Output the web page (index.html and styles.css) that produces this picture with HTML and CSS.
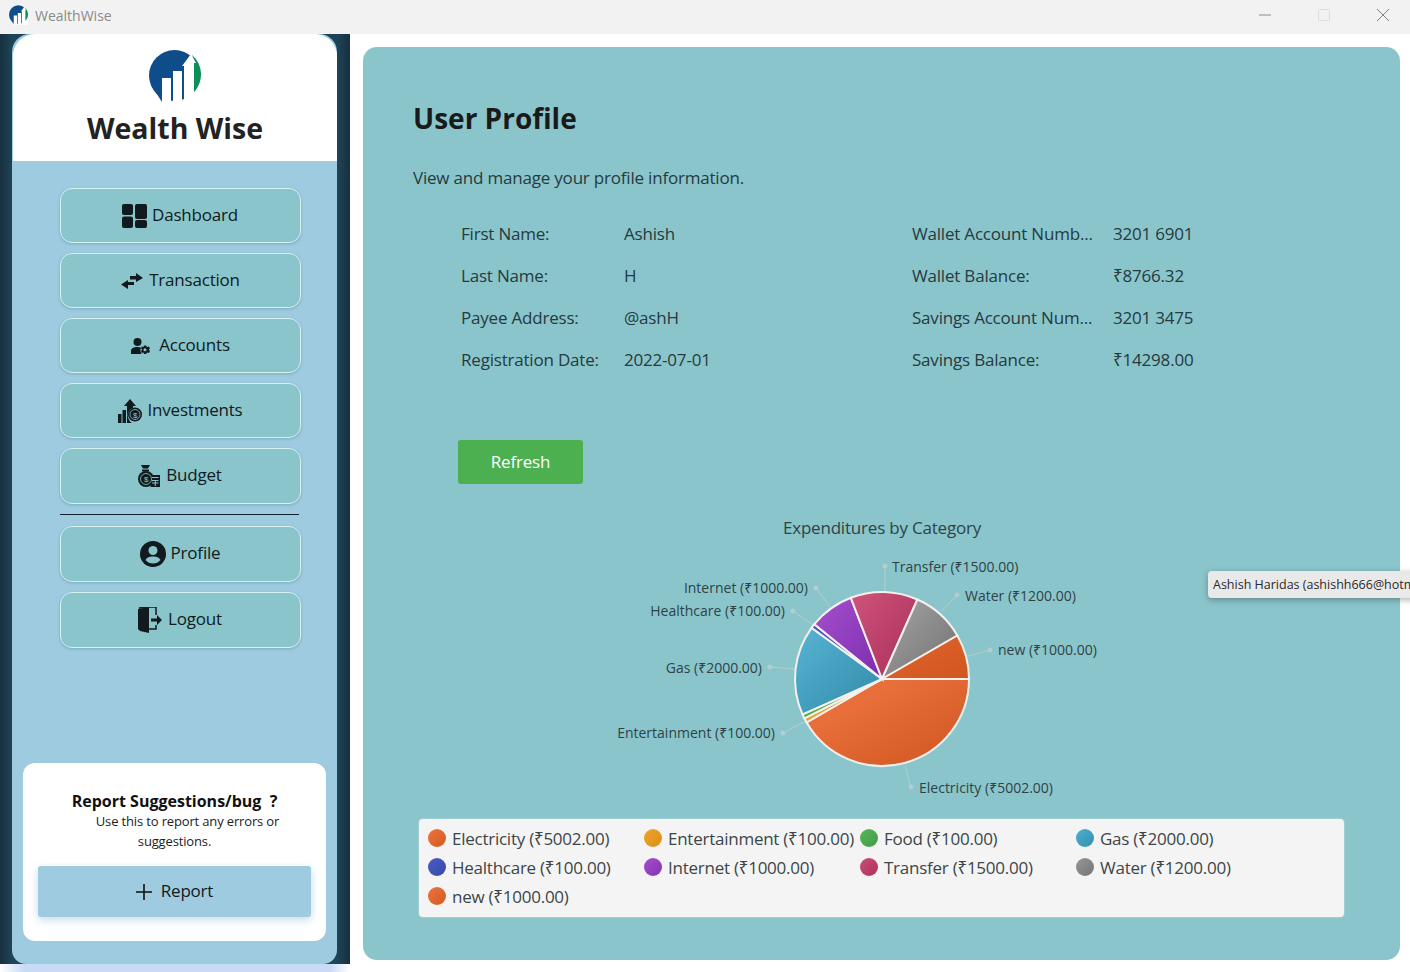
FILE: index.html
```html
<!DOCTYPE html>
<html lang="en">
<head>
  <meta charset="UTF-8">
  <meta name="viewport" content="width=device-width, initial-scale=1.0">
  <title>WealthWise</title>
  <link rel="stylesheet" href="styles.css">
</head>
<body>
  <svg class="defs" width="0" height="0">
    <symbol id="logo" viewBox="0 0 52 53">
      <circle cx="25.5" cy="25.5" r="25.5" fill="#0f4c8a"/>
      <path d="M2 35L13 52V25Z" fill="#0f4c8a"/>
      <path d="M43 5A25.5 25.5 0 0 1 45 42V13Z" fill="#0b8f57"/>
      <path d="M45 42H52V53H45ZM13 28H22V53H13ZM24 21H33V53H24ZM35 53V16H33L42 4L47 13H45V53Z" fill="#fff"/>
    </symbol>
  </svg>

  <header class="titlebar">
    <div class="app-name">
      <svg class="app-icon"><use href="#logo"/></svg>
      <span>WealthWise</span>
    </div>
    <div class="win-controls">
      <svg width="14" height="14" viewBox="0 0 14 14"><path d="M1 7H13" stroke="#8c8c8c"/></svg>
      <svg width="14" height="14" viewBox="0 0 14 14"><rect x="1.5" y="1.5" width="11" height="11" rx="1" fill="none" stroke="#dcdcdc"/></svg>
      <svg width="14" height="14" viewBox="0 0 14 14"><path d="M1 1L13 13M13 1L1 13" stroke="#808080"/></svg>
    </div>
  </header>

  <div class="window">
    <div class="side-col">
      <aside class="sidebar">
        <div class="panel">
          <div class="brand">
            <svg class="brand-logo"><use href="#logo"/></svg>
            <div class="brand-name">Wealth Wise</div>
          </div>

          <nav class="nav">
            <a class="nav-btn" href="#">
              <svg class="icon-shift" width="25" height="24" viewBox="0 0 25 24" fill="#111a1e"><rect width="11" height="11" rx="2"/><rect x="13" width="12" height="15" rx="2"/><rect y="12.500" width="11" height="11.500" rx="2"/><rect x="13" y="16" width="12" height="8" rx="2"/></svg>
              <span class="nav-label">Dashboard</span>
            </a>
            <a class="nav-btn" href="#">
              <svg width="22" height="16" viewBox="0 0 22 16" fill="#111a1e"><path d="M9 3H15V0L22 5L15 9V6.500H9ZM13 8.500V12H7V16L0 11.500L7 7V9H13Z"/></svg>
              <span class="nav-label nav-label-wide">Transaction</span>
            </a>
            <a class="nav-btn" href="#">
              <svg width="20" height="16" viewBox="0 0 20 16" fill="#111a1e"><circle cx="6.500" cy="4" r="4"/><path d="M0 16V13C0 10 3 9 6.500 9C8 9 9 9.200 10 9.500C9 12 9.500 14 10.500 16Z"/><path d="M15 7.500L16 9L18 8.500L19 10.500L17.800 11.500L19 13L18 15L16 14.500L15 16L13 16L12.500 14.500L10.800 15L10 13L11.200 11.500L10 10.500L10.800 8.500L12.500 9L13 7.500ZM14 10.300A1.500 1.500 0 1 0 14 13.300A1.500 1.500 0 1 0 14 10.300Z" fill-rule="evenodd"/></svg>
              <span class="nav-label nav-label-wider">Accounts</span>
            </a>
            <a class="nav-btn" href="#">
              <svg width="24" height="24" viewBox="0 0 24 24"><g fill="#111a1e"><rect y="15" width="3.500" height="9"/><rect x="4.500" y="11" width="3.500" height="13"/><path d="M9 24V7H6L12 0L18 7H15V9C11 10 9 14 10 18C10.500 20 12 23 14 24Z"/><circle cx="17" cy="15.500" r="7"/></g><circle cx="17" cy="15.500" r="5" fill="none" stroke="#8ac5cb" stroke-width="0.800"/><text class="coin" x="17" y="18.500">$</text></svg>
              <span class="nav-label">Investments</span>
            </a>
            <a class="nav-btn nav-btn-tall" href="#">
              <svg class="icon-shift" width="22" height="22" viewBox="0 0 22 22"><g fill="#111a1e"><path d="M3 0H12L10 3.500H5Z"/><rect x="4" y="4.500" width="7" height="2"/><circle cx="8" cy="14" r="8"/><rect x="12.500" y="10" width="9.500" height="12"/></g><circle cx="8" cy="14" r="5.500" fill="none" stroke="#8ac5cb" stroke-width="0.800"/><text class="coin" x="8" y="17">$</text><path d="M14 12.500H20.500M14 15.500H20.500M14 18H20.500M17.250 15.500V21" stroke="#8ac5cb" fill="none"/></svg>
              <span class="nav-label nav-label-wide">Budget</span>
            </a>
            <div class="nav-line"></div>
            <a class="nav-btn nav-btn-tall" href="#">
              <svg class="icon-shift" width="26" height="26" viewBox="0 0 26 26"><circle cx="13" cy="13" r="13" fill="#111a1e"/><circle cx="13" cy="9.500" r="4.500" fill="#8ac5cb"/><path d="M5.500 19C7 16 10 15.500 13 15.500C16 15.500 19 16 20.500 19C18.500 21.500 16 22.500 13 22.500C10 22.500 7.500 21.500 5.500 19Z" fill="#8ac5cb"/></svg>
              <span class="nav-label">Profile</span>
            </a>
            <a class="nav-btn nav-btn-tall" href="#">
              <svg class="icon-shift" width="24" height="26" viewBox="0 0 24 26"><path d="M1 1L11 0H18V8M18 18V22H11" fill="none" stroke="#111a1e" stroke-width="1.500"/><path d="M0 2L11 0V26L2 24L0 22Z" fill="#111a1e"/><path d="M13 11.500H19V8L24 13L19 18V14.500H13Z" fill="#111a1e"/></svg>
              <span class="nav-label nav-label-wide">Logout</span>
            </a>
          </nav>

          <section class="report-card">
            <h3>Report Suggestions/bug&nbsp; ?</h3>
            <p><span class="report-first">Use this to report any errors or</span> suggestions.</p>
            <button class="report-btn">
              <svg width="16" height="16" viewBox="0 0 16 16"><path d="M8 0V16M0 8H16" stroke="#111" stroke-width="1.600"/></svg>
              <span class="nav-label">Report</span>
            </button>
          </section>
        </div>
      </aside>
      <div class="side-foot"></div>
    </div>

    <main class="main">
      <div class="card">
        <h1>User Profile</h1>
        <p class="intro">View and manage your profile information.</p>

        <div class="profile-grid">
          <span>First Name:</span><span>Ashish</span><span>Wallet Account Numb...</span><span>3201 6901</span>
          <span>Last Name:</span><span>H</span><span>Wallet Balance:</span><span>₹8766.32</span>
          <span>Payee Address:</span><span>@ashH</span><span>Savings Account Num...</span><span>3201 3475</span>
          <span>Registration Date:</span><span>2022-07-01</span><span>Savings Balance:</span><span>₹14298.00</span>
        </div>

        <button class="refresh-btn">Refresh</button>

        <svg class="chart" width="620" height="300" viewBox="560 510 620 300">
          <defs>
            <linearGradient id="g-elec" x1="0" y1="0" x2="1" y2="1"><stop offset="0.3" stop-color="#e86e3a"/><stop offset="1" stop-color="#cf561f"/></linearGradient>
            <linearGradient id="g-gas" x1="0" y1="0" x2="1" y2="1"><stop offset="0" stop-color="#58b5d2"/><stop offset="1" stop-color="#3089aa"/></linearGradient>
            <linearGradient id="g-net" x1="0" y1="0" x2="1" y2="1"><stop offset="0" stop-color="#a650cc"/><stop offset="1" stop-color="#7a2cae"/></linearGradient>
            <linearGradient id="g-trans" x1="0" y1="0" x2="1" y2="1"><stop offset="0" stop-color="#cf557c"/><stop offset="1" stop-color="#a82c58"/></linearGradient>
            <linearGradient id="g-water" x1="0" y1="0" x2="1" y2="1"><stop offset="0" stop-color="#a6a6a6"/><stop offset="1" stop-color="#707070"/></linearGradient>
            <linearGradient id="g-new" x1="0" y1="0" x2="1" y2="1"><stop offset="0" stop-color="#e3652e"/><stop offset="1" stop-color="#d0551f"/></linearGradient>
          </defs>

          <text class="chart-title" x="882" y="534">Expenditures by Category</text>

          <g class="leaders">
            <path d="M885 592V566M942 611L957 595M968 656L990 650M905 766L911 787M795 669L770 667M804 722L783 733M813 625L793 611M830 607L816 588"/>
          </g>
          <g class="leader-dots">
            <circle cx="885" cy="566" r="2.500"/><circle cx="957" cy="595" r="2.500"/><circle cx="990" cy="650" r="2.500"/><circle cx="911" cy="787" r="2.500"/><circle cx="770" cy="667" r="2.500"/><circle cx="783" cy="733" r="2.500"/><circle cx="793" cy="611" r="2.500"/><circle cx="816" cy="588" r="2.500"/>
          </g>

          <g class="slices">
            <path fill="url(#g-elec)" d="M882 679L969 679A87 87 0 0 1 806.630 722.460Z"/>
            <path fill="#e8a020" d="M882 679L806.630 722.460A87 87 0 0 1 804.460 718.450Z"/>
            <path fill="#4caf50" d="M882 679L804.460 718.450A87 87 0 0 1 802.500 714.350Z"/>
            <path fill="url(#g-gas)" d="M882 679L802.500 714.350A87 87 0 0 1 811.640 627.830Z"/>
            <path fill="#4355b9" d="M882 679L811.640 627.830A87 87 0 0 1 814.390 624.230Z"/>
            <path fill="url(#g-net)" d="M882 679L814.390 624.230A87 87 0 0 1 850.840 597.770Z"/>
            <path fill="url(#g-trans)" d="M882 679L850.840 597.770A87 87 0 0 1 917.380 599.520Z"/>
            <path fill="url(#g-water)" d="M882 679L917.380 599.520A87 87 0 0 1 957.340 635.500Z"/>
            <path fill="url(#g-new)" d="M882 679L957.340 635.500A87 87 0 0 1 969 679Z"/>
          </g>

          <g class="pie-labels">
            <text x="892" y="572">Transfer (₹1500.00)</text>
            <text x="965" y="601">Water (₹1200.00)</text>
            <text x="998" y="655">new (₹1000.00)</text>
            <text x="919" y="793">Electricity (₹5002.00)</text>
            <text class="end" x="808" y="593">Internet (₹1000.00)</text>
            <text class="end" x="785" y="616">Healthcare (₹100.00)</text>
            <text class="end" x="762" y="673">Gas (₹2000.00)</text>
            <text class="end" x="775" y="738">Entertainment (₹100.00)</text>
          </g>
        </svg>

        <div class="legend">
          <div class="legend-item"><i class="dot dot-elec"></i>Electricity (₹5002.00)</div>
          <div class="legend-item"><i class="dot dot-ent"></i>Entertainment (₹100.00)</div>
          <div class="legend-item"><i class="dot dot-food"></i>Food (₹100.00)</div>
          <div class="legend-item"><i class="dot dot-gas"></i>Gas (₹2000.00)</div>
          <div class="legend-item"><i class="dot dot-health"></i>Healthcare (₹100.00)</div>
          <div class="legend-item"><i class="dot dot-net"></i>Internet (₹1000.00)</div>
          <div class="legend-item"><i class="dot dot-trans"></i>Transfer (₹1500.00)</div>
          <div class="legend-item"><i class="dot dot-water"></i>Water (₹1200.00)</div>
          <div class="legend-item"><i class="dot dot-elec"></i>new (₹1000.00)</div>
        </div>
      </div>
    </main>
  </div>

  <div class="tooltip">Ashish Haridas (ashishh666@hotmail.com)</div>
</body>
</html>
```

FILE: styles.css
```css
* {
  box-sizing: border-box;
}

html,
body {
  margin: 0;
  height: 100%;
  overflow: hidden;
}

body {
  background-color: #ffffff;
  color: #1c2a2e;
  font-family: "Open Sans", "Noto Sans", sans-serif;
  position: relative;
}

.defs {
  position: absolute;
}

/* title bar */
.titlebar {
  align-items: center;
  background-color: #f2f2f2;
  display: flex;
  height: 34px;
  justify-content: space-between;
  padding: 0 20px 4px 9px;
}

.app-name {
  align-items: center;
  color: #8a8a8a;
  display: flex;
  font-size: 14px;
  gap: 7px;
}

.app-icon {
  height: 20px;
  width: 19px;
}

.win-controls {
  display: flex;
  gap: 45px;
}

/* window */
.window {
  display: flex;
  height: 938px;
}

.side-col {
  display: flex;
  flex-direction: column;
  flex: 0 0 350px;
}

.sidebar {
  background: linear-gradient(90deg, #17303e 0, #1f4458 12px, #1f4458 337px, #17303e 350px);
  flex: 1;
  padding: 0 13px 0 12px;
}

.side-foot {
  background: linear-gradient(90deg, #ffffff 0, #c9daf6 24px, #c9daf6 330px, #ffffff 350px);
  height: 8px;
}

.panel {
  background-color: #9ecbdf;
  border-radius: 18px 18px 14px 14px;
  display: flex;
  flex-direction: column;
  height: 100%;
}

.brand {
  align-items: center;
  background-color: #ffffff;
  border-radius: 22px 22px 0 0;
  display: flex;
  flex-direction: column;
  height: 127px;
  margin-left: 1px;
  padding-top: 16px;
}

.brand-logo {
  height: 53px;
  width: 52px;
}

.brand-name {
  color: #222222;
  font-size: 28.500px;
  font-weight: 700;
  line-height: 40px;
  margin-top: 5px;
}

.nav {
  display: flex;
  flex-direction: column;
  gap: 10px;
  padding: 27px 0 0 48px;
  width: 289px;
}

.nav-btn {
  align-items: center;
  background-color: #8ac5cb;
  border: 1.5px solid #d6f1f2;
  border-radius: 12px;
  box-shadow: 0 1px 3px rgba(60, 110, 130, 0.35);
  color: #111a1e;
  display: flex;
  font-size: 17px;
  gap: 5px;
  height: 55px;
  justify-content: center;
  letter-spacing: -0.2px;
  text-decoration: none;
}

.nav-btn-tall {
  height: 56px;
}

.nav-label {
  margin-bottom: 3px;
}

.nav-label-wide {
  margin-left: 1px;
}

.nav-label-wider {
  margin-left: 3px;
}

.icon-shift {
  margin-left: -1px;
}

.nav-line {
  background-color: #10202a;
  height: 1px;
  margin: 0 0 1px;
  width: 239px;
}

.coin {
  fill: #8ac5cb;
  font-family: "Liberation Sans", sans-serif;
  font-size: 8px;
  text-anchor: middle;
}

.report-card {
  background-color: #ffffff;
  border-radius: 12px;
  display: flex;
  flex-direction: column;
  height: 178px;
  margin: auto 11px 23px;
  padding: 26px 15px 0;
  text-align: center;
}

.report-card h3 {
  color: #111111;
  font-size: 16px;
  font-weight: 700;
  line-height: 24px;
  margin: 0;
}

.report-card p {
  color: #1c1c1c;
  font-size: 13px;
  letter-spacing: -0.15px;
  line-height: 20px;
  margin: -2px 0 15px;
}

.report-first {
  display: block;
  padding-left: 26px;
}

.report-btn {
  align-items: center;
  background-color: #9ecbdf;
  border: none;
  border-radius: 3px;
  box-shadow: 0 3px 8px rgba(100, 150, 190, 0.35);
  color: #111a1e;
  display: flex;
  font-family: inherit;
  font-size: 17px;
  gap: 9px;
  height: 51px;
  justify-content: center;
  letter-spacing: -0.2px;
}

/* main card */
.main {
  flex: 1;
  padding: 13px 10px 12px 13px;
}

.card {
  background-color: #8ac5cb;
  border-radius: 14px;
  height: 100%;
  padding: 50px 0 0 50px;
}

.card h1 {
  color: #1a1a1a;
  font-size: 28px;
  font-weight: 700;
  line-height: 42px;
  margin: 0;
}

.intro {
  color: #263a3f;
  font-size: 17px;
  letter-spacing: -0.2px;
  line-height: 24px;
  margin: 27px 0 0;
}

.profile-grid {
  color: #263a3f;
  display: grid;
  font-size: 17px;
  grid-template-columns: 163px 288px 201px auto;
  letter-spacing: -0.2px;
  line-height: 24px;
  margin-top: 32px;
  padding-left: 48px;
  row-gap: 18px;
}

.refresh-btn {
  background-color: #4caf50;
  border: none;
  border-radius: 3px;
  color: #ffffff;
  display: block;
  font-family: inherit;
  font-size: 17px;
  height: 44px;
  letter-spacing: -0.2px;
  margin: 68px 0 0 45px;
  padding-bottom: 3px;
  width: 125px;
}

.chart {
  display: block;
  margin: 26px 0 0 147px;
}

.chart-title {
  fill: #2e4348;
  font-size: 17px;
  letter-spacing: -0.2px;
  text-anchor: middle;
}

.leaders path {
  fill: none;
  stroke: #b5cdd0;
  stroke-width: 1;
}

.leader-dots circle {
  fill: #b5cdd0;
}

.slices path {
  stroke: #f3f0ee;
  stroke-width: 2;
}

.pie-labels text {
  fill: #2e4348;
  font-size: 14px;
}

.pie-labels .end {
  text-anchor: end;
}

.legend {
  background-color: #f4f4f4;
  border-radius: 4px;
  box-shadow: 0 0 2px rgba(255, 255, 255, 0.6);
  display: grid;
  grid-auto-rows: 29px;
  grid-template-columns: repeat(4, 216px);
  height: 98px;
  margin: 9px 0 0 6px;
  padding: 5px 0 0 9px;
  width: 925px;
}

.legend-item {
  align-items: center;
  color: #3c4648;
  display: flex;
  font-size: 17px;
  gap: 6px;
  letter-spacing: -0.25px;
  white-space: nowrap;
}

.dot {
  border-radius: 50%;
  display: block;
  flex: 0 0 18px;
  height: 18px;
  margin-bottom: 2px;
}

.dot-elec { background: linear-gradient(135deg, #ee7440, #d4591f); }
.dot-ent { background: linear-gradient(135deg, #eca52a, #de8f1a); }
.dot-food { background: linear-gradient(135deg, #57b65b, #419b46); }
.dot-gas { background: linear-gradient(135deg, #4fb0cd, #348fb0); }
.dot-health { background: linear-gradient(135deg, #4a5cc2, #3849a8); }
.dot-net { background: linear-gradient(135deg, #a64fcb, #8432b4); }
.dot-trans { background: linear-gradient(135deg, #ca4f77, #ad305c); }
.dot-water { background: linear-gradient(135deg, #969696, #757575); }

.tooltip {
  background-color: #e9e9e9;
  border-radius: 4px;
  box-shadow: 0 2px 6px rgba(0, 0, 0, 0.3);
  color: #2a2a2a;
  font-size: 12.500px;
  height: 27px;
  left: 1208px;
  line-height: 27px;
  padding: 0 5px;
  position: absolute;
  top: 571px;
  white-space: nowrap;
}
```
